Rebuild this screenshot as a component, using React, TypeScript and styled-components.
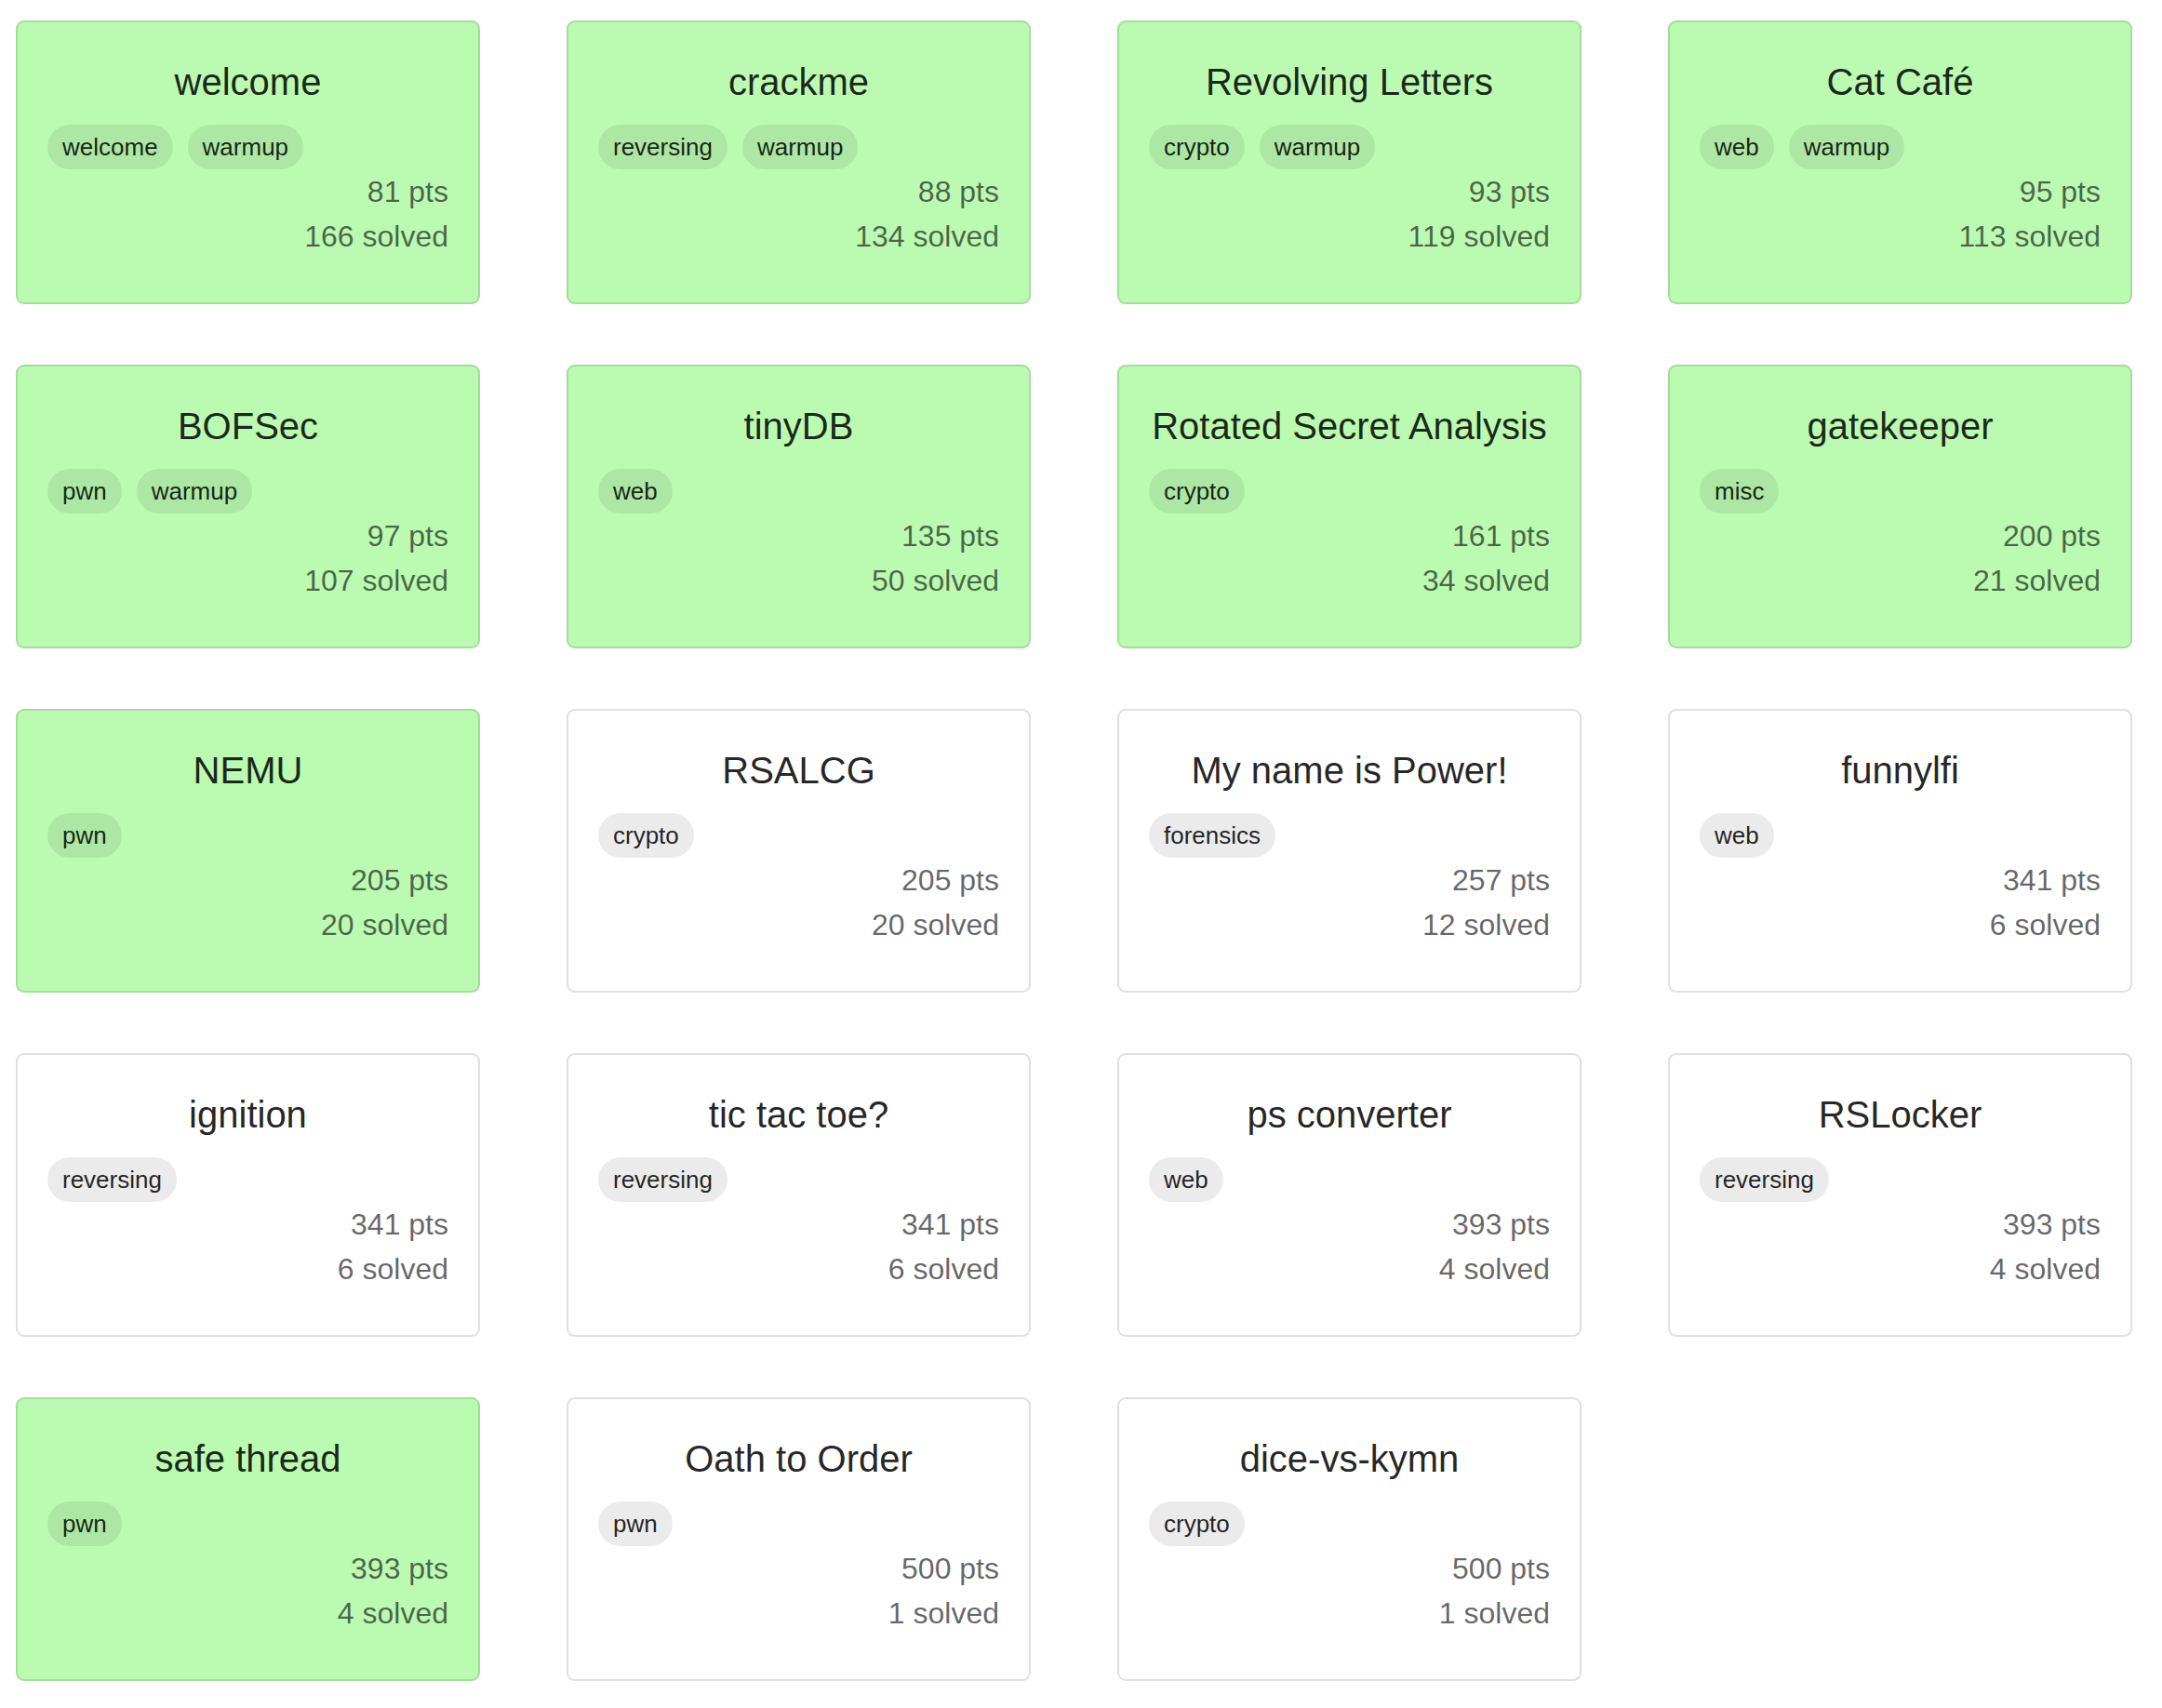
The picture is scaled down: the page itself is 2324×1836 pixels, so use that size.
import React from "react";
import styled, { createGlobalStyle } from "styled-components";

const GlobalStyle = createGlobalStyle`
  html, body {
    margin: 0;
    padding: 0;
    background: #ffffff;
    font-family: "Liberation Sans", Arial, Helvetica, sans-serif;
  }
`;

type Challenge = {
  name: string;
  tags: string[];
  points: number;
  solves: number;
  solved: boolean;
};

const challenges: Challenge[] = [
  { name: "welcome", tags: ["welcome", "warmup"], points: 81, solves: 166, solved: true },
  { name: "crackme", tags: ["reversing", "warmup"], points: 88, solves: 134, solved: true },
  { name: "Revolving Letters", tags: ["crypto", "warmup"], points: 93, solves: 119, solved: true },
  { name: "Cat Café", tags: ["web", "warmup"], points: 95, solves: 113, solved: true },
  { name: "BOFSec", tags: ["pwn", "warmup"], points: 97, solves: 107, solved: true },
  { name: "tinyDB", tags: ["web"], points: 135, solves: 50, solved: true },
  { name: "Rotated Secret Analysis", tags: ["crypto"], points: 161, solves: 34, solved: true },
  { name: "gatekeeper", tags: ["misc"], points: 200, solves: 21, solved: true },
  { name: "NEMU", tags: ["pwn"], points: 205, solves: 20, solved: true },
  { name: "RSALCG", tags: ["crypto"], points: 205, solves: 20, solved: false },
  { name: "My name is Power!", tags: ["forensics"], points: 257, solves: 12, solved: false },
  { name: "funnylfi", tags: ["web"], points: 341, solves: 6, solved: false },
  { name: "ignition", tags: ["reversing"], points: 341, solves: 6, solved: false },
  { name: "tic tac toe?", tags: ["reversing"], points: 341, solves: 6, solved: false },
  { name: "ps converter", tags: ["web"], points: 393, solves: 4, solved: false },
  { name: "RSLocker", tags: ["reversing"], points: 393, solves: 4, solved: false },
  { name: "safe thread", tags: ["pwn"], points: 393, solves: 4, solved: true },
  { name: "Oath to Order", tags: ["pwn"], points: 500, solves: 1, solved: false },
  { name: "dice-vs-kymn", tags: ["crypto"], points: 500, solves: 1, solved: false },
];

const Page = styled.main`
  padding: 22px 0 0 17px;
`;

const Grid = styled.div`
  display: grid;
  grid-template-columns: repeat(4, 499px);
  column-gap: 93px;
  row-gap: 65px;
`;

const Card = styled.div<{ $solved: boolean }>`
  box-sizing: border-box;
  width: 499px;
  height: 305px;
  padding: 34px 32px 32px;
  border: 2px solid rgba(0, 0, 0, 0.12);
  border-radius: 9px;
  background: ${(p) => (p.$solved ? "#bbfbb1" : "#ffffff")};
  display: flex;
  flex-direction: column;
`;

const Title = styled.h2`
  margin: 0;
  font-size: 40px;
  line-height: 60px;
  font-weight: 400;
  text-align: center;
  color: rgba(0, 0, 0, 0.87);
  white-space: nowrap;
`;

const TagRow = styled.div`
  display: flex;
  gap: 16px;
  margin-top: 16px;
`;

const Tag = styled.span`
  display: inline-block;
  padding: 8px 16px;
  font-size: 26px;
  line-height: 32px;
  border-radius: 24px;
  background: rgba(0, 0, 0, 0.08);
  color: rgba(0, 0, 0, 0.87);
`;

const Stat = styled.div`
  text-align: right;
  font-size: 32px;
  line-height: 48px;
  color: rgba(0, 0, 0, 0.6);
`;

export default function App() {
  return (
    <Page>
      <GlobalStyle />
      <Grid>
        {challenges.map((c) => (
          <Card key={c.name} $solved={c.solved}>
            <Title>{c.name}</Title>
            <TagRow>
              {c.tags.map((t) => (
                <Tag key={t}>{t}</Tag>
              ))}
            </TagRow>
            <Stat>{c.points} pts</Stat>
            <Stat>{c.solves} solved</Stat>
          </Card>
        ))}
      </Grid>
    </Page>
  );
}
